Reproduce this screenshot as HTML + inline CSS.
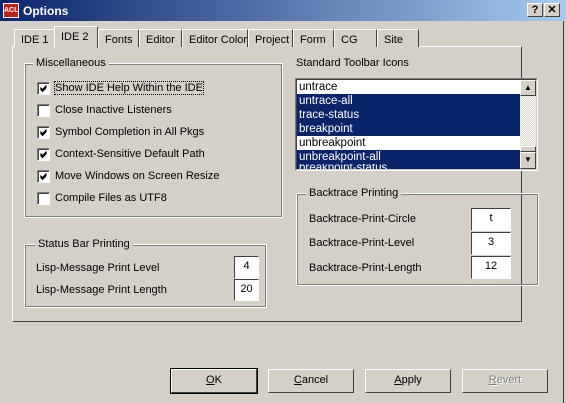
<html><head><style>
*{margin:0;padding:0;box-sizing:border-box}
body{width:566px;height:403px;background:#d4d0c8;font-family:"Liberation Sans",sans-serif;font-size:11px;color:#000;position:relative;overflow:hidden}
.a{position:absolute;white-space:nowrap}
.title{left:0;top:0;width:566px;height:21px;background:linear-gradient(90deg,#0a246a,#a6caf0);color:#fff;font-weight:bold;font-size:12px}
.tb{width:16px;height:14px;background:#d4d0c8;border:1px solid;border-color:#fff #404040 #404040 #fff;font-weight:bold;color:#000;text-align:center;line-height:12px;font-size:11px}
.tab{top:29px;height:18px;border:1px solid;border-color:#fff #404040 transparent #fff;border-bottom:none;padding:4px 0 0 6px;background:#d4d0c8}
.panel{left:12px;top:46px;width:510px;height:276px;border:1px solid;border-color:#fff #404040 #404040 #fff}
.grp{border:1px solid #fff;outline:1px solid #808080;outline-offset:-2px}
.gl{background:#d4d0c8;padding:0 3px}
.cb{width:13px;height:13px;background:#fff;border:1px solid;border-color:#808080 #fff #fff #808080;box-shadow:inset 1px 1px 0 #404040}
.in{width:25px;height:22px;background:#fff;border:1px solid;border-color:#404040 #fff #fff #404040;text-align:center;line-height:18px}
.btn{top:369px;width:86px;height:24px;border:1px solid;border-color:#fff #404040 #404040 #fff;text-align:center;line-height:21px;font-size:11px}
.li{left:297px;width:223px;height:14px;padding-left:2px;line-height:14px;font-size:11.5px;overflow:hidden}
.s{background:#0a246a;color:#fff}
</style></head><body>
<div class="a title"><div class="a" style="left:3px;top:3px;width:16px;height:15px;background:#c02018;border:1px solid #fff;font-size:7px;line-height:13px;text-align:center">ACL</div><div class="a" style="left:23px;top:4px">Options</div>
<div class="a tb" style="left:527px;top:3px">?</div><div class="a tb" style="left:544px;top:3px">✕</div></div>
<div class="a" style="left:563px;top:21px;width:1px;height:382px;background:#404040"></div>
<div class="a panel"></div>
<div class="a tab" style="left:14px;width:42px">IDE 1</div>
<div class="a tab" style="left:139px;width:43px">Editor</div>
<div class="a tab" style="left:98px;width:41px">Fonts</div>
<div class="a tab" style="left:182px;width:66px">Editor Color</div>
<div class="a tab" style="left:248px;width:45px">Project</div>
<div class="a tab" style="left:293px;width:41px">Form</div>
<div class="a tab" style="left:334px;width:43px">CG</div>
<div class="a tab" style="left:377px;width:42px">Site</div>
<div class="a tab" style="left:54px;top:26px;width:44px;height:22px;border-right-color:#404040;padding-top:4px">IDE 2</div>

<div class="a grp" style="left:24px;top:63px;width:259px;height:155px"></div>
<div class="a gl" style="left:33px;top:57px">Miscellaneous</div>
<svg width="0" height="0" style="position:absolute"><defs><path id="ck" d="M2.5 5.5 L4.5 7.5 L8.5 3.5 M2.5 6.5 L4.5 8.5 L8.5 4.5 M2.5 4.5 L4.5 6.5 L8.5 2.5" stroke="#000" fill="none"/></defs></svg>
<div class="a cb" style="left:37px;top:82px"><svg width="11" height="11"><use href="#ck"/></svg></div><div class="a" style="left:55px;top:82px;outline:1px dotted #000">Show IDE Help Within the IDE</div>
<div class="a cb" style="left:37px;top:104px"></div><div class="a" style="left:55px;top:104px">Close Inactive Listeners</div>
<div class="a cb" style="left:37px;top:126px"><svg width="11" height="11"><use href="#ck"/></svg></div><div class="a" style="left:55px;top:126px">Symbol Completion in All Pkgs</div>
<div class="a cb" style="left:37px;top:148px"><svg width="11" height="11"><use href="#ck"/></svg></div><div class="a" style="left:55px;top:148px">Context-Sensitive Default Path</div>
<div class="a cb" style="left:37px;top:170px"><svg width="11" height="11"><use href="#ck"/></svg></div><div class="a" style="left:55px;top:170px">Move Windows on Screen Resize</div>
<div class="a cb" style="left:37px;top:192px"></div><div class="a" style="left:55px;top:192px">Compile Files as UTF8</div>

<div class="a grp" style="left:24px;top:244px;width:243px;height:64px"></div>
<div class="a gl" style="left:35px;top:238px">Status Bar Printing</div>
<div class="a" style="left:36px;top:262px">Lisp-Message Print Level</div>
<div class="a in" style="left:234px;top:256px;width:25px;height:23px">4</div>
<div class="a" style="left:36px;top:284px">Lisp-Message Print Length</div>
<div class="a in" style="left:234px;top:279px;width:25px;height:22px">20</div>

<div class="a" style="left:296px;top:57px">Standard Toolbar Icons</div>
<div class="a" style="left:295px;top:78px;width:243px;height:93px;border:1px solid;border-color:#808080 #fff #fff #808080;background:#fff;overflow:hidden">
<div class="a" style="left:0;top:0;width:241px;height:91px;border:1px solid;border-color:#404040 #d4d0c8 #d4d0c8 #404040"></div></div>
<div class="a li" style="top:80px">untrace</div>
<div class="a li s" style="top:94px">untrace-all</div>
<div class="a li s" style="top:108px">trace-status</div>
<div class="a li s" style="top:122px">breakpoint</div>
<div class="a li" style="top:136px">unbreakpoint</div>
<div class="a li s" style="top:150px">unbreakpoint-all</div>
<div class="a li s" style="top:164px;height:5px;line-height:9px">breakpoint-status</div>
<div class="a" style="left:520px;top:80px;width:16px;height:89px;background:repeating-conic-gradient(#d4d0c8 0 25%,#fff 0 50%) 0 0/2px 2px"></div>
<div class="a tb" style="left:520px;top:80px;height:16px;font-size:8px;line-height:14px">▲</div>
<div class="a tb" style="left:520px;top:146px;height:6px"></div>
<div class="a tb" style="left:520px;top:152px;height:17px;font-size:8px;line-height:14px">▼</div>

<div class="a grp" style="left:296px;top:193px;width:243px;height:93px"></div>
<div class="a gl" style="left:306px;top:187px">Backtrace Printing</div>
<div class="a" style="left:309px;top:213px">Backtrace-Print-Circle</div>
<div class="a in" style="left:471px;top:208px;width:40px;height:23px">t</div>
<div class="a" style="left:309px;top:237px">Backtrace-Print-Level</div>
<div class="a in" style="left:471px;top:232px;width:40px;height:23px">3</div>
<div class="a" style="left:309px;top:262px">Backtrace-Print-Length</div>
<div class="a in" style="left:471px;top:256px;width:40px;height:23px">12</div>

<div class="a btn" style="left:171px;outline:1px solid #000"><u>O</u>K</div>
<div class="a btn" style="left:268px"><u>C</u>ancel</div>
<div class="a btn" style="left:365px"><u>A</u>pply</div>
<div class="a btn" style="left:462px;color:#808080;text-shadow:1px 1px 0 #fff"><u>R</u>evert</div>
</body></html>
